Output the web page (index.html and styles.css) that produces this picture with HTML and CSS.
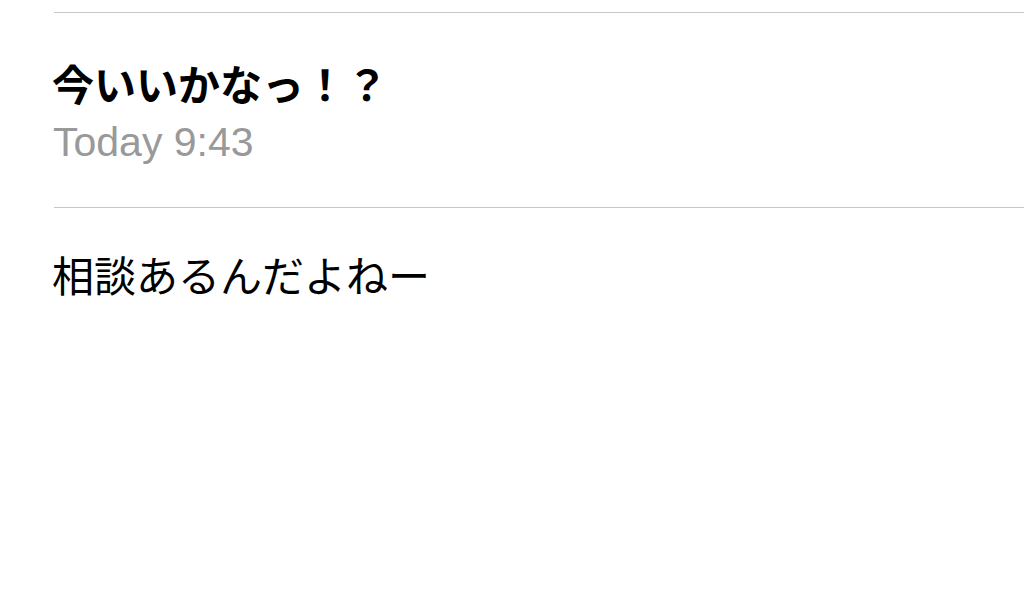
FILE: index.html
```html
<!DOCTYPE html>
<html lang="ja">
<head>
  <meta charset="UTF-8" />
  <meta name="viewport" content="width=device-width, initial-scale=1.0"/>
  <title>今いいかなっ！？</title>
  <link rel="stylesheet" href="styles.css">
</head>
<body>
  <div class="mail">
    <div class="mail-head">
      <h2 class="subject">今いいかなっ！？</h2>
      <div class="date">Today 9:43</div>
    </div>
    <div class="mail-body">
      <p>相談あるんだよねー</p>
    </div>
  </div>
</body>
</html>
```

FILE: styles.css
```css
* {
  box-sizing: border-box;
  margin: 0;
  padding: 0;
}
body {
  font-family: "Noto Sans CJK JP", "Liberation Sans", sans-serif;
  background: #fff;
  color: #000;
}
.mail {
  padding-top: 12px;
}
.mail-head {
  margin-left: 54px;
  border-top: 1px solid #c8c7cc;
  border-bottom: 1px solid #c8c7cc;
  padding: 46px 0 42px;
}
.subject {
  margin-left: -2px;
  font-size: 42px;
  font-weight: bold;
  line-height: 48px;
}
.date {
  margin: 12px 0 0 -1px;
  font-family: "Liberation Sans", sans-serif;
  font-size: 41px;
  line-height: 46px;
  color: #999;
}
.mail-body {
  padding: 42px 0 0 52px;
}
.mail-body p {
  font-size: 42px;
  line-height: 48px;
}
```
